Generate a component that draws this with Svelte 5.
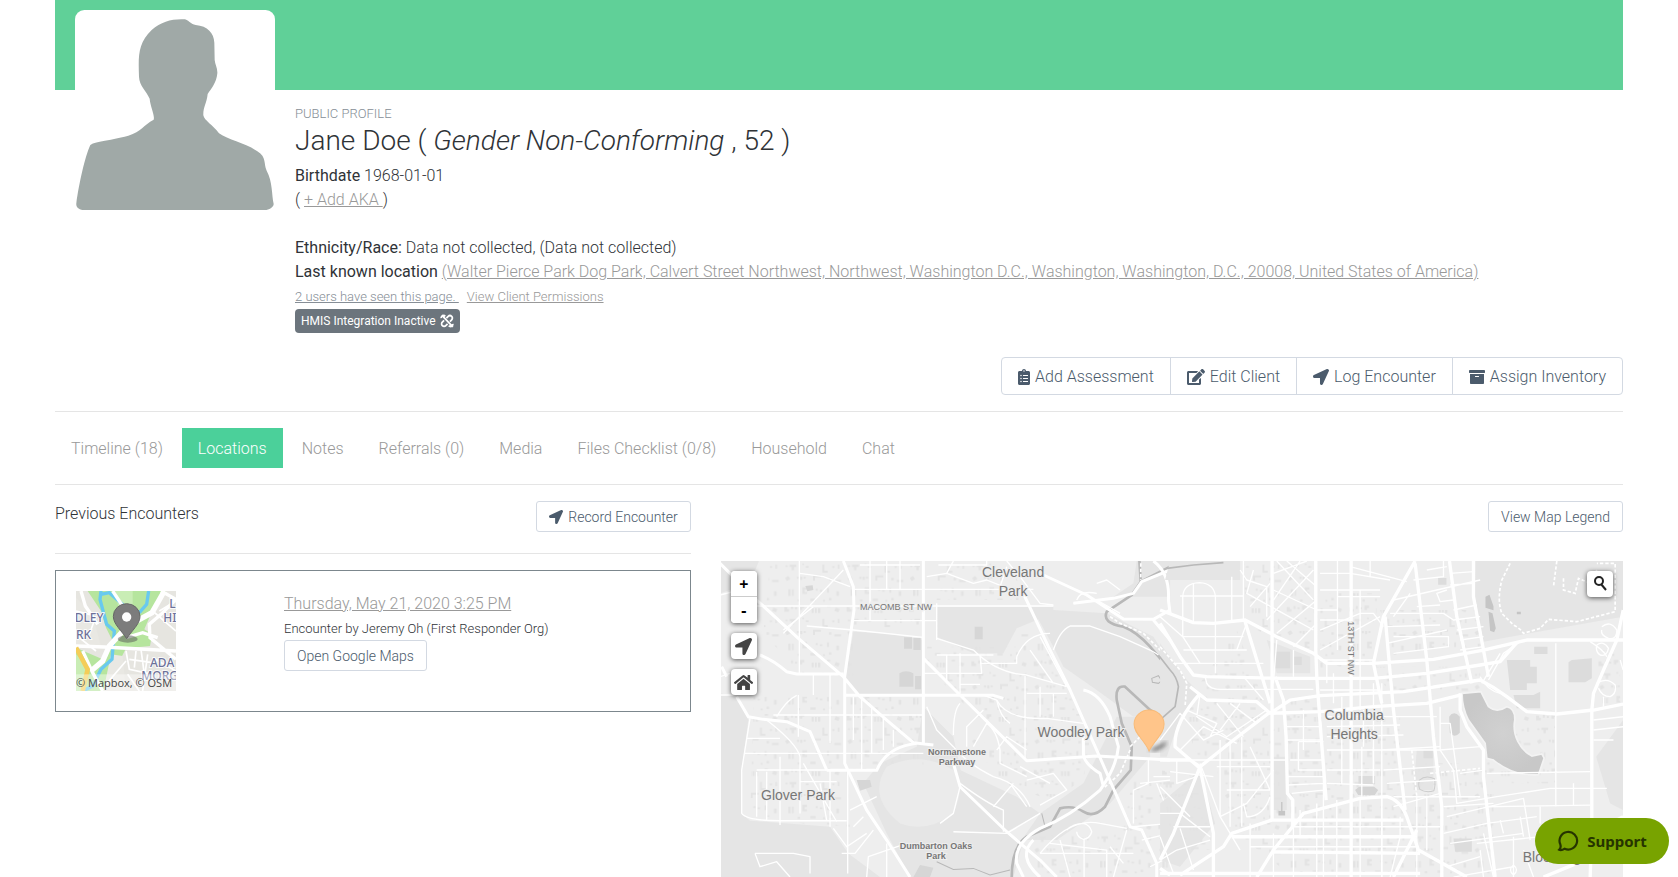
<script>
  const icons = {
    clipboard: {
      box: '0 0 384 512',
      path: 'M336 64h-80c0-35.3-28.7-64-64-64s-64 28.7-64 64H48C21.5 64 0 85.5 0 112v352c0 26.5 21.5 48 48 48h288c26.5 0 48-21.5 48-48V112c0-26.5-21.5-48-48-48zM96 424c-13.3 0-24-10.7-24-24s10.7-24 24-24 24 10.7 24 24-10.7 24-24 24zm0-96c-13.3 0-24-10.7-24-24s10.7-24 24-24 24 10.7 24 24-10.7 24-24 24zm0-96c-13.3 0-24-10.7-24-24s10.7-24 24-24 24 10.7 24 24-10.7 24-24 24zm96-192c13.3 0 24 10.7 24 24s-10.7 24-24 24-24-10.7-24-24 10.7-24 24-24zm128 368c0 4.4-3.6 8-8 8H168c-4.4 0-8-3.6-8-8v-16c0-4.4 3.6-8 8-8h144c4.4 0 8 3.6 8 8v16zm0-96c0 4.4-3.6 8-8 8H168c-4.4 0-8-3.6-8-8v-16c0-4.4 3.6-8 8-8h144c4.4 0 8 3.6 8 8v16zm0-96c0 4.4-3.6 8-8 8H168c-4.4 0-8-3.6-8-8v-16c0-4.4 3.6-8 8-8h144c4.4 0 8 3.6 8 8v16z'
    },
    edit: {
      box: '0 0 576 512',
      path: 'M402.6 83.2l90.2 90.2c3.8 3.8 3.8 10 0 13.8L274.4 405.6l-92.8 10.3c-12.4 1.4-22.9-9.1-21.5-21.5l10.3-92.8L388.8 83.2c3.8-3.8 10-3.8 13.8 0zm162-22.9l-48.8-48.8c-15.2-15.2-39.9-15.2-55.2 0l-35.4 35.4c-3.8 3.8-3.8 10 0 13.8l90.2 90.2c3.8 3.8 10 3.8 13.8 0l35.4-35.4c15.2-15.3 15.2-40 0-55.2zM384 346.2V448H64V128h229.8c3.2 0 6.2-1.3 8.5-3.5l40-40c7.6-7.6 2.2-20.5-8.5-20.5H48C21.5 64 0 85.5 0 112v352c0 26.5 21.5 48 48 48h352c26.5 0 48-21.5 48-48V306.2c0-10.7-12.9-16-20.5-8.5l-40 40c-2.2 2.3-3.5 5.3-3.5 8.5z'
    },
    arrow: {
      box: '0 0 512 512',
      path: 'M444.52 3.52L28.74 195.42c-47.97 22.39-31.98 92.75 19.19 92.75h175.91v175.91c0 51.17 70.36 67.17 92.75 19.19l191.9-415.78c15.99-38.39-25.59-79.97-63.97-63.97z'
    },
    archive: {
      box: '0 0 512 512',
      path: 'M32 448c0 17.7 14.3 32 32 32h384c17.7 0 32-14.3 32-32V160H32v288zm160-212c0-6.6 5.4-12 12-12h104c6.6 0 12 5.4 12 12v8c0 6.6-5.4 12-12 12H204c-6.6 0-12-5.4-12-12v-8zM480 32H32C14.3 32 0 46.3 0 64v48c0 8.8 7.2 16 16 16h480c8.8 0 16-7.2 16-16V64c0-17.7-14.3-32-32-32z'
    },
    home: {
      box: '0 0 576 512',
      path: 'M280.37 148.26L96 300.11V464a16 16 0 0 0 16 16l112.06-.29a16 16 0 0 0 15.92-16V368a16 16 0 0 1 16-16h64a16 16 0 0 1 16 16v95.64a16 16 0 0 0 16 16.05L464 480a16 16 0 0 0 16-16V300L295.67 148.26a12.19 12.19 0 0 0-15.3 0zM571.6 251.47L488 182.56V44.05a12 12 0 0 0-12-12h-56a12 12 0 0 0-12 12v72.61L318.47 43a48 48 0 0 0-61 0L4.34 251.47a12 12 0 0 0-1.6 16.9l25.5 31A12 12 0 0 0 45.15 301l235.22-193.74a12.19 12.19 0 0 1 15.3 0L530.9 301a12 12 0 0 0 16.9-1.6l25.5-31a12 12 0 0 0-1.7-16.93z'
    }
  };

  const actions = [
    { label: 'Add Assessment', icon: 'clipboard' },
    { label: 'Edit Client', icon: 'edit' },
    { label: 'Log Encounter', icon: 'arrow' },
    { label: 'Assign Inventory', icon: 'archive' }
  ];

  const tabs = ['Timeline (18)', 'Locations', 'Notes', 'Referrals (0)', 'Media', 'Files Checklist (0/8)', 'Household', 'Chat'];
  let activeTab = 'Locations';

  const labels = [
    { text: 'Cleveland', x: 292, y: 16, kind: 'area' },
    { text: 'Park', x: 292, y: 35, kind: 'area' },
    { text: 'Woodley Park', x: 360, y: 176, kind: 'area' },
    { text: 'Glover Park', x: 77, y: 239, kind: 'area' },
    { text: 'Columbia', x: 633, y: 159, kind: 'area' },
    { text: 'Heights', x: 633, y: 178, kind: 'area' },
    { text: 'Bloomingdale', x: 844, y: 301, kind: 'area' },
    { text: 'MACOMB ST NW', x: 175, y: 49, kind: 'street' },
    { text: 'Normanstone', x: 236, y: 194, kind: 'park' },
    { text: 'Parkway', x: 236, y: 204, kind: 'park' },
    { text: 'Dumbarton Oaks', x: 215, y: 288, kind: 'park' },
    { text: 'Park', x: 215, y: 298, kind: 'park' }
  ];
</script>

{#snippet icon(name)}
  <svg class="icon icon-{name}" viewBox={icons[name].box} aria-hidden="true"><path d={icons[name].path} /></svg>
{/snippet}

<div class="page">
  <header class="banner"></header>

  <section class="profile">
    <svg class="avatar" viewBox="0 0 600 600" role="img" aria-label="Client photo">
      <rect width="600" height="600" rx="28" fill="#fff" />
      <path fill="#a0a9a7" d="M330 28C345 34 347 42 362 45C398 48 417 70 418 98L419 150C420 164 428 174 427 190C425 218 408 237 398 252C395 280 384 292 385 316C388 332 414 345 432 370C460 390 510 398 547 424C576 442 565 462 575 482C593 515 590 555 596 582C596 592 582 600 570 600H28C14 600 2 592 4 580C12 520 30 440 45 407C50 395 100 393 160 377C200 364 205 345 236 329C240 316 226 290 224 266C214 242 193 228 192 200C190 140 188 100 230 60C260 34 292 26 330 28Z" />
    </svg>
    <div class="details">
      <div class="eyebrow">PUBLIC PROFILE</div>
      <h1>Jane Doe ( <i>Gender Non-Conforming</i> , 52 )</h1>
      <p><b>Birthdate</b> 1968-01-01</p>
      <p class="aka">( <a href="#aka">+ Add AKA&nbsp;</a>)</p>
      <p><b>Ethnicity/Race:</b> Data not collected, (Data not collected)</p>
      <p><b>Last known location</b> <a href="#location">(Walter Pierce Park Dog Park, Calvert Street Northwest, Northwest, Washington D.C., Washington, Washington, D.C., 20008, United States of America)</a></p>
      <p class="seen">
        <a class="users" href="#views">2 users have seen this page.&nbsp;</a>
        <a href="#permissions">View Client Permissions</a>
      </p>
      <span class="badge">
        HMIS Integration Inactive
        <svg class="unlink" viewBox="0 0 24 24" aria-hidden="true">
          <path d="M11 7l3-3a4 4 0 0 1 6 6l-3 3M13 17l-3 3a4 4 0 0 1-6-6l3-3M2 7a4 4 0 0 1 7-3M22 17a4 4 0 0 1-7 3M3 2l19 20" />
        </svg>
      </span>
    </div>
  </section>

  <div class="actions">
    {#each actions as action}
      <button>{@render icon(action.icon)}{action.label}</button>
    {/each}
  </div>

  <nav class="tabs">
    {#each tabs as tab}
      <button class:active={tab === activeTab} on:click={() => (activeTab = tab)}>{tab}</button>
    {/each}
  </nav>

  <main class="row">
    <section class="col">
      <div class="col-head">
        <h2>Previous Encounters</h2>
        <button class="btn">{@render icon('arrow')}Record Encounter</button>
      </div>
      <hr>
      <article class="card">
        <svg class="thumb" viewBox="0 0 300 300" role="img" aria-label="Encounter location">
          <rect width="300" height="300" fill="#e6e5e0" />
          <path fill="#b6e59e" d="M35 0H270L235 45L205 115L228 130L222 165L150 172L85 300H0V170L80 205L110 150L90 110L75 60Z" />
          <path fill="#c9edb5" d="M110 0h60v45l-35 20zM0 190l35 30-10 80H0z" />
          <path fill="#e9e8e3" d="M0 20L45 60L60 110L75 165H0ZM105 190L140 195L150 300H82Z" />
          <g fill="none" stroke="#68c9ef" stroke-width="10">
            <path d="M75 0L72 25L92 100L115 120L108 205L75 235L50 285L20 300M75 10L100 5L145 45M218 0L212 40L190 65" />
          </g>
          <g fill="none" stroke="#fff">
            <path stroke-width="5" d="M0 60L40 70M60 75L40 130M10 140L60 180M150 180L160 235L230 250M180 180L175 230M230 60L300 120M250 60L300 30M195 175L205 250M90 280L150 210M215 190L200 300M230 200L300 240M160 205L230 215M155 250L190 300" />
            <path stroke-width="10" d="M15 0L28 45L65 100M0 165L85 168L300 180M110 0L150 60L165 40M255 0L300 25L255 70L220 100L222 140L270 180L300 205M20 180L50 245L80 300M150 140L200 125L245 140" />
            <path stroke-width="16" d="M265 0L228 65L155 105L100 165L80 210L45 240" />
          </g>
          <path fill="none" stroke="#f4cd59" stroke-width="14" d="M0 170L35 235L20 300" />
          <g class="thumb-label">
            <text x="-4" y="92">DLEY</text><text x="0" y="143">RK</text><text x="280" y="50">L</text>
            <text x="262" y="92">HI</text><text x="222" y="227">ADA</text><text x="196" y="266">MORG</text>
          </g>
          <ellipse cx="155" cy="144" rx="30" ry="11" fill="#555" opacity=".5" />
          <path fill="#7c7c7c" stroke="#666" stroke-width="3" d="M152 143C138 120 112 100 112 76a40 38 0 0 1 80 0C192 100 166 120 152 143Z" />
          <circle cx="152" cy="78" r="14" fill="#fff" />
          <rect y="250" width="300" height="50" fill="#fff" opacity=".4" />
          <text class="credit" x="0" y="288">© Mapbox, © OSM</text>
        </svg>
        <div>
          <a class="date" href="#encounter">Thursday, May 21, 2020 3:25 PM</a>
          <p class="by">Encounter by Jeremy Oh (First Responder Org)</p>
          <button class="btn">Open Google Maps</button>
        </div>
      </article>
    </section>

    <section class="col map-col">
      <div class="col-head end">
        <button class="btn">View Map Legend</button>
      </div>
      <div class="map">
        <svg class="tiles" viewBox="0 0 902 316" preserveAspectRatio="xMidYMin slice" role="img" aria-label="Map of encounters">
          <defs>
            <pattern id="houses" width="187" height="163" patternUnits="userSpaceOnUse">
              <path fill="#e3e3e3" d="M6 8h9v6h5v8H6zM26 5h6v9h-6zM38 9h6v6h-6zM52 4h14v7h-6v6h-8zM88 12h6v14h-6zM98 12h5v14h-5zM107 12h7v14h-7zM134 3h10v5h-10zM160 10l12 4-4 10-12-4zM10 46h6v5h-6zM22 44h20v7h-7v10h-7v-10h-6zM60 40h5v5h-5zM70 48h9v5h-9zM120 44h6v18h10v6h-16zM150 48h6v6h-6zM166 44h5v12h-5zM8 84l10-6 6 9-10 6zM44 80h6v7h-6zM54 80h6v10h-6zM64 80h6v6h-6zM92 76h24v6H98v10h-6zM140 84h7v7h-7zM156 90h20v6h-20zM18 118h7v20h-7zM29 118h5v20h-5zM60 112h14v7h-7v7h7v6H60zM100 116h6v6h-6zM112 120h8v5h-8zM134 114h6v14h-6zM162 124h8v14h-8zM46 148h7v7h-7zM84 146h16v7H84zM122 150h6v5h-6zM140 144h7v7h-7z" />
            </pattern>
            <radialGradient id="water"><stop offset="0" stop-color="#d1d1d1" /><stop offset="1" stop-color="#c8c8c8" /></radialGradient>
            <filter id="soft"><feGaussianBlur stdDeviation="2" /></filter>
          </defs>
          <rect width="902" height="316" fill="#eee" />

          <g transform="translate(-1 -11) scale(.33333)">
            <g fill="#e5e5e5">
              <path d="M0 0H130L90 100L0 130ZM0 430L50 440L85 510L65 660V790L90 812L330 830L385 910L480 981H0Z" />
              <path d="M400 245L500 250L610 270V435H420L375 390ZM650 170H1000V190L890 235L850 310L760 310L650 260Z" />
              <path d="M1000 180L1160 190L1300 260L1350 340V490L1240 500L1130 420L1030 350L1000 290L940 180Z" />
              <path d="M1250 33H1350V140H1180L1240 100ZM610 470L700 560L730 700L850 840L905 890L880 981H570L500 850L430 700L480 640L590 590Z" />
              <path d="M720 660L890 740L960 790L860 845L730 710ZM1190 500H1290V620L1170 760L1010 870H905L960 790L1090 700Z" />
              <path fill="#ebebeb" d="M500 650Q600 600 700 660Q740 700 700 790Q620 850 540 820Q440 740 500 650Z" />
            </g>
            <path fill="url(#houses)" d="M100 440H610V650H520L380 660L390 830L250 820L90 790L100 510ZM150 40H600V235H400V380L240 370L130 250ZM650 40H860L930 150H650ZM620 290H920V620L740 470L620 350ZM900 220L990 300L1110 560L1090 690L990 750L850 700L740 560L920 620ZM920 860L1350 820V981H960ZM1240 680H1350V830H1210Z" />
            <g fill="#d6d6d6">
              <path d="M552 262h24v34h-24zM580 264h22v36h-22zM538 370q20-12 42 0v40h-42zM585 378h18v40h-18zM764 230h24v38h-24zM410 690h40l5 20-35 12zM600 945l40 8-10 28h-50zM256 108l22-2 2 14-18 4z" />
            </g>
            <g fill="none" stroke="#b8b8b8" stroke-width="8">
              <path d="M1258 33L1262 95L1235 135L1160 185Q1145 220 1210 230Q1250 245 1290 290L1350 360M1262 95L1350 50" />
              <path d="M1350 490L1325 500L1290 480L1215 410Q1185 405 1190 450L1205 520L1235 590L1232 660L1180 720L1155 770Q1120 805 1090 785Q1060 765 1020 775L990 830L920 860Q875 890 875 981" />
              <path stroke-width="3" d="M965 790L975 830M650 935L700 958L760 955L810 975L870 960M1295 385l20-8 10 15-10 8-18-3z" />
            </g>
            <g fill="none" stroke="#fff" stroke-width="4" stroke-linejoin="round">
              <path d="M238 33V370M110 168H1000M400 118H940M400 212H650M240 70L310 80L390 110M370 60L190 250M260 228L400 240L610 262M650 160V270M540 33V118M450 33V212M500 33V120M420 45H600" />
              <path d="M280 375V435M330 375V580M235 435V560M160 495H610M80 565H180M75 610H610M110 660H370M240 695H350M65 790V660L90 505M65 790Q80 812 180 812H380M330 660V830M180 620V825M110 665V800M140 665V810M250 640L350 815M300 700L320 810M170 500Q200 450 230 436M140 510Q230 580 240 620V790M425 440V660M455 470V610M490 500V600M520 540V590M400 440V570" />
              <path d="M650 265L760 300Q830 370 920 375L1040 410M680 315V400M650 315H820M720 310V430M780 315L785 370H610M720 403H780M790 435L830 450Q860 510 980 505L1090 520M915 378V625M920 430H1040M960 410V500M1000 430V500M1000 300Q1020 240 1050 228H1110L1200 260L1290 300Q1330 320 1350 350M890 320Q920 250 990 250M890 320V340L780 340M930 300L1000 400M960 260L1040 410" />
              <path d="M620 470L650 540L700 590Q740 640 820 680Q900 700 930 770M700 555Q700 480 720 460M740 590V530L790 480M760 590L800 520Q830 540 840 600V640L920 680M830 600L860 560L920 600M830 450Q840 500 870 520M920 690L1000 670L1040 720L960 765M720 710L700 790L660 820M720 700Q800 760 850 780L850 845M700 845L860 850L960 790M820 770L880 700M870 700L920 770M900 650L990 700" />
              <path d="M340 835L380 890L440 850M383 660V970M365 910H405L460 840M390 780L470 740M400 830L430 800M105 910H220L270 920V970M105 910L120 950L170 935L210 981M500 880V981M440 981L445 920L560 880" />
              <path d="M960 910Q1050 800 1140 820L1220 835M1040 840Q1060 820 1090 820Q1110 825 1115 845Q1110 865 1090 868Q1070 860 1070 845M1092 868V981M960 910H1240M990 880L1160 900V981M1170 890L1210 940M1220 840L1180 981M1240 830L1350 820M1285 630V700L1240 720V820M1260 700L1350 690M1310 700L1350 800M1265 870L1350 850M1290 950L1350 920M1020 870L1050 981M1300 680H1350" />
              <path d="M1060 160L1130 150L1200 190M1130 100L1160 90L1200 120M1070 150Q1080 120 1130 130M860 33L900 80L960 160L1000 165M700 33L680 70M620 80L680 70L760 100L800 90L850 110M860 50L840 110M655 45H800V33M0 135L60 120M190 240L280 170M0 380L30 370M0 435H40" />
            </g>
            <path fill="none" stroke="#fff" stroke-width="5" stroke-dasharray="10 6" d="M1170 200L1200 220L1270 250L1340 320M1230 600L1200 670L1150 715M1262 40V90M1260 560L1230 590" />
            <g fill="none" stroke="#fff" stroke-width="9" stroke-linejoin="round">
              <path d="M0 40L110 150L235 265L370 380L420 440L500 510L580 578L640 585M610 33V580M370 33L400 110L402 180L385 300L374 380V640L440 780L500 870L570 981M375 436H820L850 445M610 325L720 435L920 632L1130 618L1350 630M320 661H470Q500 590 590 580M50 440L85 500L130 508L200 515L270 545L320 660M120 315Q160 330 200 365L230 372H370M5 350L20 380" />
              <path d="M905 120L985 290L1050 420L1130 600L1230 830L1265 840L1310 940V981M700 640L720 710L860 845L960 930L1010 981M970 75L1100 135L1210 207L1300 208L1350 180M1060 160L1180 145L1240 130L1265 95L1350 60M1090 550V610Q1090 640 1140 670L1150 710M1090 420Q1140 430 1170 500L1195 590Q1190 650 1140 720Q1050 800 960 835Q880 880 890 940L910 981M940 870Q890 920 960 981M1300 33Q1350 70 1345 150L1350 190M1300 210L1350 270" />
            </g>
          </g>

          <g transform="translate(439 -11) scale(.33333)">
            <g fill="#e5e5e5">
              <path d="M30 33H240V90H15ZM946 33H1389V200L1080 255L970 275L944 140ZM0 280L80 390L120 430L60 500L20 620H0ZM1308 620L1389 510V780L1350 760ZM340 620H380V780H340ZM770 600h50v120h-60zM320 270L450 320V370H350ZM120 660L165 820L60 950L0 930V760Z" />
            </g>
            <path fill="url(#houses)" d="M250 40H470V300L340 270L260 220ZM480 130H650V360H480ZM660 180H960L970 290L700 320ZM640 350H960V420L700 450ZM370 450L480 440L500 700L390 750ZM500 640H1000V981H400L230 850L160 630L320 500ZM60 480L150 440H320V500L120 640ZM0 660L110 680L160 900H40ZM1100 480H1185V700H1020L980 640ZM1300 300H1380V460H1300ZM240 460H330L150 620ZM500 500H720V640H500ZM120 400L230 240L310 450H140Z" />
            <g fill="#dcdcdc">
              <path d="M1040 330h70v20h20v50h-30v20h-50zM1122 290h40v22h-40zM1235 330l60-5v60l-20 12h-50v-60zM1060 435h60l20-10v50h-70zM880 865h55v40h-50zM834 84h25v20h-25zM345 305h45v50h-45zM400 320h25v25h-25zM595 678h50v25h-50zM790 600h28v25h-28z" />
            </g>
            <g fill="#c5c5c5">
              <path d="M976 140l12-6 12 35v12l-24-8zM985 185l12 5 10 45-5 12-12-5zM1070 185h12v8h-12z" />
              <path fill="#d4d4d4" d="M867 500q14-20 32 0v48q-16 18-30 0zM585 720l12-10h45l12 10-10 15h-50z" />
              <path fill="none" stroke="#ccc" stroke-width="3" d="M778 690q18-16 45-4 4 20-2 36-22 8-42-4-6-15-1-28" />
              <path d="M363 756h4v26h8v14h-20v-14h8z" />
              <path fill="none" stroke="#b8b8b8" stroke-width="5" d="M-5 315L30 360Q50 380 55 410L45 470L5 505M20 55L100 45L190 38" />
            </g>
            <path fill="url(#water)" stroke="#f3f3f3" stroke-width="5" d="M906 430L962 425L985 470Q1010 490 1040 470Q1065 475 1064 510C1055 555 1080 600 1115 618L1145 612L1152 624L1135 674Q1060 680 1000 630L980 625L975 580L925 510Q905 470 906 430Z" />
            <g fill="none" stroke="#fff" stroke-width="4" stroke-linejoin="round">
              <path d="M68 140Q70 100 118 98Q162 100 166 140V370M68 140V260L120 340M0 200L68 260H250M60 138H250M70 300H260M40 340H310M250 33V210M215 80V210M100 218V100M240 60L260 90L320 110V200M280 60L260 130L460 240M380 33L470 110M340 120L470 180M340 70L440 33M350 33L460 150M270 170L330 100M340 150L420 33M320 210L460 60M350 250L470 150M400 290L470 220" />
              <path d="M532 33V300M480 120H660M480 70H570L690 90M570 50L740 95M480 300L660 200M480 240L600 190H640L670 230M532 140L660 140M480 210H570M630 33V80M470 180H530M600 120V480M640 400V700M500 330V400M520 370V460" />
              <path d="M700 150L960 90M690 190H850L880 210L960 200M680 230L840 225M700 260L865 260V290L700 310M760 90L850 80V33M680 280L860 240M860 120L830 130L840 155L880 150M870 70L940 65M870 105L940 100M880 180L950 165M890 240L970 230M900 270L970 260M900 300L970 290M800 60L860 50M750 130L700 200M770 170L840 165" />
              <path d="M500 500H830M500 530L720 525M500 560L730 555M500 600H840L960 590M430 480V600M415 575V660H490M415 575H490M490 605V980M545 440V700M605 590V740M640 590V700M500 660H660M500 700L640 705M660 600L840 590M670 660L840 650M680 700L840 690M700 740H960M665 400V981M610 480V590M380 530H480M380 570H480M390 630H490M380 680H490M385 705L490 700M395 730L490 720" />
              <path d="M840 520L870 520L900 740M840 470V600L880 660L890 760L1010 740L1170 715H1340M900 670L970 660M860 800L1090 745L1110 870M850 850L980 820L1130 800M870 880L1090 850M980 770L1290 765M970 850L1000 981M1140 770V820M1187 280V770M1090 900L1120 981M860 950L960 920M980 670L1290 665M1080 800L1090 860M1300 510L1389 500M1300 540L1389 530M1300 570H1360M1020 810L1030 850" />
              <path d="M0 570L60 490L130 570L190 540M60 600L130 530L230 580M80 480L170 520L150 560M120 430L110 500L200 560L320 480M170 460L250 560M210 460L290 520M240 460L180 540M180 570V800L240 900M210 580V830M245 560V830M50 630H380M170 650H330M120 640L180 800L260 760L340 660M30 665L160 680M50 630V700L110 680M0 710L90 800M150 830H40M0 790H60L150 860M200 720H330M270 590L330 720M250 760L260 800Q310 800 330 740M0 930L50 900L150 870M60 835L100 960M0 860L40 970" />
              <path d="M270 820V981M400 800V981M470 760V981M530 750V981M600 740V981M665 740V981M720 800V860L690 981M400 860H770M400 830H840M270 890H400M340 850V981M400 890H770M420 780V860M700 770L840 730M770 740V981M800 740V900M850 770L1000 760M1060 860V981M950 880L1140 860M1060 945Q1078 960 1060 975Q1042 960 1060 945M960 900L970 981M880 981L1060 950M1140 930H1389M1240 700V765" />
              <path d="M135 380L140 400Q150 418 180 418H460M250 380L310 450M350 270L340 400M400 300V380M260 220L230 300M480 420H660M480 330H640M1325 230Q1350 210 1370 240Q1370 270 1345 265Q1320 255 1325 240M1310 285Q1330 270 1345 295Q1340 320 1320 315Q1305 305 1310 285M1290 275Q1330 300 1340 320M1310 400Q1340 380 1365 405Q1370 430 1350 440Q1325 440 1315 415M1330 440V470M1380 330L1389 360M985 390L1030 310L1080 275M965 400L1020 310M960 380Q980 420 1020 430" />
            </g>
            <path fill="none" stroke="#fff" stroke-width="5" stroke-dasharray="10 6" d="M1050 40L1025 90Q1010 150 1025 190L1060 225Q1080 235 1090 250L1140 235L1165 208L1250 215L1365 185V40H1310M1190 33L1180 110M1210 85V120L1245 130L1255 85L1290 100L1310 60M0 290L60 360L80 400L75 470M755 600L770 740M810 670L960 655" />
            <g fill="none" stroke="#fff" stroke-width="10" stroke-linejoin="round">
              <path d="M336 33V810M467 33V300L470 380L480 520L498 750M573 33V981M765 33L670 200L640 340L665 460M765 40L800 330L820 560L845 770V981M675 200L700 480L735 780M868 33L890 200L935 400M940 33V140L985 380M0 180L100 218L160 220L255 210L350 260L460 310L500 340H640L820 328L970 300L1100 270H1389" />
              <path d="M0 220L60 320L100 375L140 380L370 385H640L800 370L960 345L1020 335L1070 278M90 410L140 450L290 455L330 490M255 215L330 460M345 380L370 450L378 560L382 730L398 750V830M330 490L390 450L480 437L730 425L860 405L960 390Q1000 410 1040 440L1100 485L1190 492L1300 480L1389 462M320 490L480 485L640 470L800 460L900 435" />
              <path d="M325 490L220 570L120 650L80 750L40 850L0 930M120 430Q40 520 45 590Q80 620 120 655L160 850V981M900 430V480L920 530L970 600V680L985 810L1005 981M1389 180L1370 270L1330 360L1300 430L1295 480V830L1290 981M0 630H90L120 650M290 981L340 900L430 790L600 745L680 740Q720 750 740 800L775 900L920 981M60 975L190 890L215 850L335 810H730M215 860H765M335 905L780 910M0 970H780M770 840L700 981M0 955L30 975M1150 981L1250 940M1389 800L1370 810" />
            </g>
          </g>

          <text class="street" transform="translate(627 87) rotate(90)" text-anchor="middle">13TH ST NW</text>
          {#each labels as label}
            <text class={label.kind} x={label.x} y={label.y} text-anchor="middle">{label.text}</text>
          {/each}

          <path d="M427 190L434 186L446 180L444 185L436 190Z" fill="#444" opacity=".7" filter="url(#soft)" />
          <path d="M428 190C423 178 413 173 413 163a15 14 0 0 1 30 0C443 173 434 178 428 190Z" fill="#ffc58a" stroke="#f9bb78" />
        </svg>

        <div class="controls">
          <div class="zoom">
            <button aria-label="Zoom in">+</button>
            <button aria-label="Zoom out">-</button>
          </div>
          <button class="tool" aria-label="My location">{@render icon('arrow')}</button>
          <button class="tool" aria-label="Home">{@render icon('home')}</button>
        </div>
        <button class="tool search" aria-label="Search the map">
          <svg viewBox="0 0 16 16" aria-hidden="true"><circle cx="7" cy="5" r="4" /><path d="M9 8l5 6" /></svg>
        </button>
      </div>
    </section>
  </main>

  <button class="support">
    <svg viewBox="0 0 20 20" aria-hidden="true"><path d="M2 18Q4 16 3 13A8 8 0 1 1 7 17Q4 19 2 18Z" /></svg>
    Support
  </button>
</div>

<style>
  :global(body) {
    margin: 0;
    background: #fff;
  }

  .page {
    box-sizing: border-box;
    display: flex;
    flex-direction: column;
    min-height: 100vh;
    padding: 0 55px;
    font-family: Roboto, "Liberation Sans", sans-serif;
    font-size: 16px;
    font-weight: 300;
    line-height: 24px;
    color: #2f3337;
  }

  h1, h2, p {
    margin: 0;
    font-weight: 300;
  }

  b {
    font-weight: 400;
  }

  a {
    color: #999;
    text-decoration: underline;
  }

  button {
    font: inherit;
    color: #4b5b6c;
    background: #fff;
    cursor: pointer;
  }

  .icon {
    height: 16px;
    fill: #4b5b6c;
  }

  .banner {
    height: 90px;
    background: #60d098;
  }

  .profile {
    display: flex;
    align-items: flex-start;
    gap: 20px;
    padding: 0 20px;
  }

  .avatar {
    flex: none;
    width: 200px;
    height: 200px;
    margin-top: -80px;
  }

  .details {
    padding-top: 14px;
  }

  .eyebrow {
    font-size: 13px;
    line-height: 20px;
    color: #868e96;
  }

  h1 {
    margin-bottom: 7px;
    font-size: 28px;
    line-height: 33px;
  }

  .aka {
    margin-bottom: 24px;
  }

  .seen {
    display: flex;
    gap: 8px;
    font-size: 13px;
    line-height: 25px;
  }

  .users {
    color: #868e96;
  }

  .badge {
    display: flex;
    align-items: center;
    gap: 4px;
    width: fit-content;
    height: 24px;
    padding: 0 6px;
    border-radius: 4px;
    font-size: 12px;
    font-weight: 400;
    color: #fff;
    background: #6c757d;
  }

  .unlink {
    width: 14px;
    height: 14px;
    fill: none;
    stroke: #fff;
    stroke-width: 3;
  }

  .actions {
    display: flex;
    align-self: flex-end;
    margin: 24px 0 16px;
  }

  .actions button {
    display: flex;
    align-items: center;
    gap: 5px;
    height: 38px;
    margin-left: -1px;
    padding: 1px 16px 0;
    border: 1px solid #d3d9e2;
  }

  .actions button:first-child {
    border-radius: 4px 0 0 4px;
  }

  .actions button:last-child {
    border-radius: 0 4px 4px 0;
  }

  .tabs {
    display: flex;
    gap: 3px;
    padding: 16px 0;
    border-top: 1px solid #e5e5e5;
    border-bottom: 1px solid #e5e5e5;
  }

  .tabs button {
    height: 40px;
    padding: 2px 16px 0;
    border: 0;
    color: #999;
  }

  .tabs .active {
    color: #fff;
    background: #4bd09a;
  }

  .row {
    display: grid;
    flex: 1;
    grid-template-columns: 5fr 7fr;
    margin: 16px -15px 0;
  }

  .col {
    padding: 0 15px;
  }

  .map-col {
    display: flex;
    flex-direction: column;
  }

  .col-head {
    display: flex;
    align-items: flex-start;
    justify-content: space-between;
    height: 52px;
  }

  .end {
    justify-content: flex-end;
    height: 60px;
  }

  h2 {
    font-size: 16px;
    line-height: 26px;
  }

  .btn {
    display: inline-flex;
    align-items: center;
    gap: 5px;
    height: 31px;
    padding: 0 12px;
    border: 1px solid #d3d9e2;
    border-radius: 3px;
    font-size: 14px;
  }

  .btn .icon {
    height: 14px;
  }

  hr {
    margin: 0 0 16px;
    border: 0;
    border-top: 1px solid #e5e5e5;
  }

  .card {
    display: grid;
    grid-template-columns: 208px 1fr;
    padding: 20px;
    border: 1px solid #7c878d;
  }

  .thumb {
    width: 100px;
    height: 100px;
  }

  .thumb-label {
    font: 500 36px "Noto Sans", sans-serif;
    fill: #6d7199;
    stroke: #fff;
    stroke-width: 5px;
    paint-order: stroke;
  }

  .credit {
    font: 36px "Open Sans", sans-serif;
    font-size: 33px;
    fill: #444;
  }

  .date {
    display: block;
    line-height: 26px;
  }

  .by {
    font-size: 13px;
    line-height: 23px;
  }

  .map {
    position: relative;
    flex: 1;
    min-height: 300px;
    overflow: hidden;
  }

  .tiles {
    position: absolute;
    width: 100%;
    height: 100%;
  }

  .tiles text {
    font-family: "Liberation Sans", sans-serif;
    font-weight: 400;
    fill: #777;
    stroke: #eee;
    stroke-width: 2px;
    paint-order: stroke;
  }

  .tiles .area {
    font-size: 14px;
  }

  .tiles .street {
    font-size: 9px;
  }

  .tiles .park {
    font-size: 9px;
    font-weight: 700;
  }

  .controls {
    position: absolute;
    top: 10px;
    left: 10px;
    display: grid;
    gap: 10px;
  }

  .zoom, .tool {
    border-radius: 4px;
    background: #fff;
    box-shadow: 0 1px 5px rgba(0, 0, 0, 0.65);
  }

  .zoom {
    overflow: hidden;
  }

  .zoom button {
    display: block;
    width: 26px;
    height: 26px;
    padding: 0;
    border: 0;
    font: bold 16px/26px "Noto Sans", sans-serif;
    color: #000;
  }

  .zoom button:first-child {
    border-bottom: 1px solid #ccc;
  }

  .tool {
    display: grid;
    place-items: center;
    width: 26px;
    height: 26px;
    padding: 0;
    border: 0;
  }

  .tool .icon {
    height: 17px;
    fill: #444;
  }

  .search {
    position: absolute;
    top: 10px;
    right: 10px;
  }

  .search svg {
    width: 16px;
    height: 16px;
    fill: none;
    stroke: #222;
    stroke-width: 2;
  }

  .support {
    position: fixed;
    right: 9px;
    bottom: 13px;
    display: flex;
    align-items: center;
    justify-content: center;
    gap: 8px;
    width: 134px;
    height: 46px;
    border: 0;
    border-radius: 23px;
    font: bold 15px "Noto Sans", sans-serif;
    color: #263400;
    background: #78a300;
  }

  .support svg {
    width: 22px;
    height: 22px;
    fill: none;
    stroke: #263400;
    stroke-width: 2;
  }
</style>
